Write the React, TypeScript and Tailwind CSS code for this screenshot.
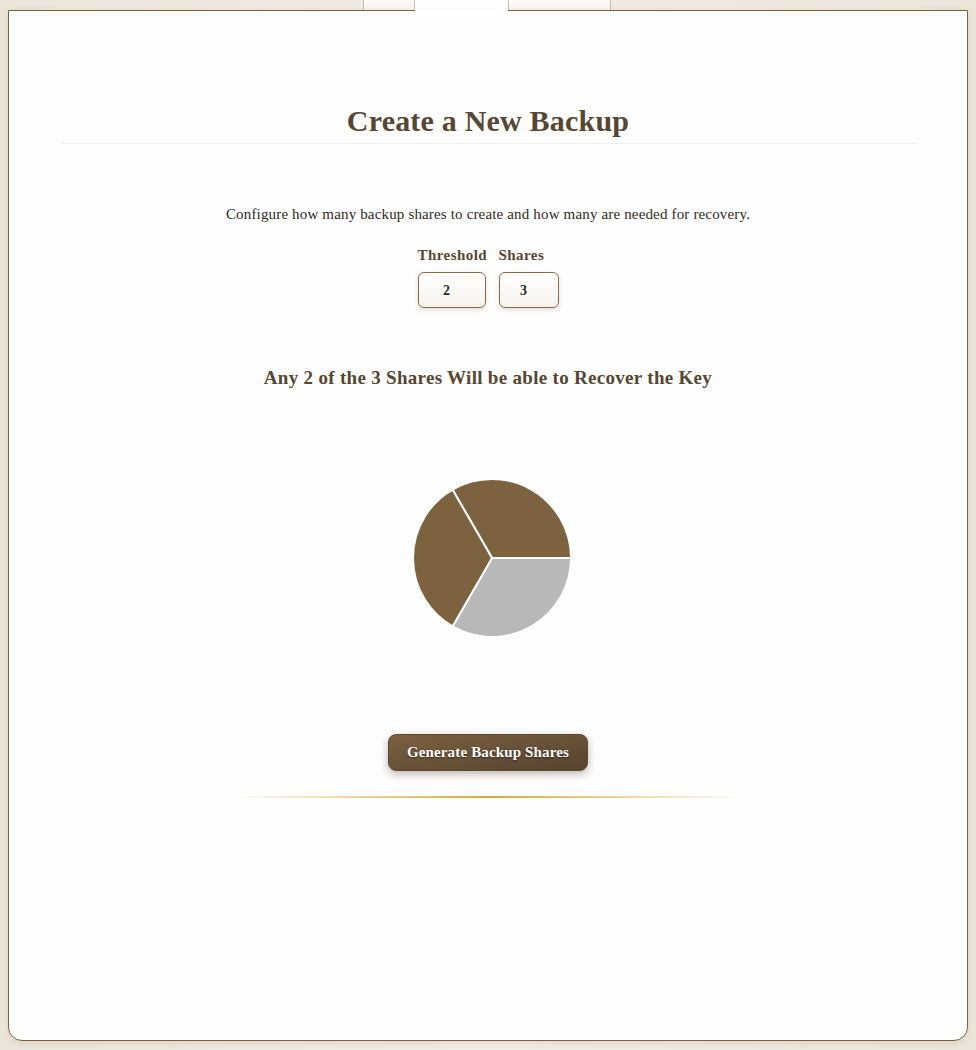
import React from 'react'

const serif = { fontFamily: '"Liberation Serif", "DejaVu Serif", serif' }

function PieChart() {
  // 3 shares, threshold 2 -> two brown slices, one grey
  const cx = 80
  const cy = 80
  const r = 79
  const pt = (deg: number) => {
    const a = (deg * Math.PI) / 180
    return `${cx + r * Math.cos(a)} ${cy + r * Math.sin(a)}`
  }
  const slice = (a0: number, a1: number) =>
    `M ${cx} ${cy} L ${pt(a0)} A ${r} ${r} 0 0 1 ${pt(a1)} Z`

  return (
    <svg width="160" height="160" viewBox="0 0 160 160">
      <path d={slice(-120, 0)} fill="#7d6240" stroke="#ffffff" strokeWidth="2" />
      <path d={slice(0, 120)} fill="#b8b8b8" stroke="#ffffff" strokeWidth="2" />
      <path d={slice(120, 240)} fill="#7d6240" stroke="#ffffff" strokeWidth="2" />
    </svg>
  )
}

export default function App() {
  return (
    <div
      className="min-h-[1050px] w-full bg-gradient-to-r from-[#ebe5da] via-[#f1ede6] to-[#ebe5da] px-2 pb-[9px]"
      style={serif}
    >
      {/* tabs (scrolled, only the bottom edge shows) */}
      <div className="flex h-[10px] pl-[355px]">
        <div className="w-[52px] border-x border-[#c9bda9] bg-gradient-to-b from-[#fdfcfa] to-[#f5f2ec]" />
        <div className="w-[93px] bg-[#fefefe]" />
        <div className="w-[103px] border-x border-[#c9bda9] bg-gradient-to-b from-[#fdfcfa] to-[#f5f2ec]" />
      </div>

      <div className="relative flex h-[1031px] flex-col items-center rounded-b-[14px] border border-[#7d5f3a] bg-[#fefefe] shadow-[0_2px_6px_rgba(90,70,40,0.12)]">
        {/* gap in top border under active tab */}
        <div className="absolute -top-px left-[406px] h-px w-[93px] bg-[#fefefe]" />

        <div className="mt-[92px] w-[855px] border-b border-[#f1eeea] pb-[4px] text-center">
          <h1 className="text-[30px] font-bold leading-[36px] tracking-[0.2px] text-[#574631]">Create a New Backup</h1>
        </div>

        <p className="mt-[61px] text-[15px] leading-[18px] tracking-[0.16px] text-[#2e2a25]">
          Configure how many backup shares to create and how many are needed for recovery.
        </p>

        <div className="mt-[24px] flex gap-[13px]">
          <div className="flex w-[68px] flex-col">
            <label className="text-[15px] font-bold leading-[16px] tracking-[0.45px] text-[#574631]">Threshold</label>
            <div className="mt-[9px] flex h-[36px] items-center justify-center rounded-[6px] border border-[#8a6a45] bg-gradient-to-b from-[#ffffff] to-[#f6f3ef] pr-[10px] text-[14px] font-bold text-[#2e2a25] shadow-[0_2px_4px_rgba(90,70,40,0.18)]">
              2
            </div>
          </div>
          <div className="flex w-[60px] flex-col">
            <label className="text-[15px] font-bold leading-[16px] tracking-[0.45px] text-[#574631]">Shares</label>
            <div className="mt-[9px] flex h-[36px] items-center justify-center rounded-[6px] border border-[#8a6a45] bg-gradient-to-b from-[#ffffff] to-[#f6f3ef] pr-[10px] text-[14px] font-bold text-[#2e2a25] shadow-[0_2px_4px_rgba(90,70,40,0.18)]">
              3
            </div>
          </div>
        </div>

        <h2 className="mt-[59px] text-[19px] font-bold leading-[22px] tracking-[0.3px] text-[#574631]">
          Any 2 of the 3 Shares Will be able to Recover the Key
        </h2>

        <div className="mt-[89px] pl-[8px]">
          <PieChart />
        </div>

        <button className="mt-[96px] h-[37px] w-[200px] rounded-[8px] border border-[#5c4830] bg-gradient-to-br from-[#7c613f] to-[#554330] text-[15px] font-bold tracking-[0.15px] text-white shadow-[0_3px_8px_rgba(60,45,25,0.35)] [text-shadow:0_1px_2px_rgba(0,0,0,0.5)]">
          Generate Backup Shares
        </button>

        <div className="mt-[25px] h-[2px] w-[515px] bg-gradient-to-r from-transparent via-[#d8aa3c] to-transparent" />
      </div>
    </div>
  )
}
